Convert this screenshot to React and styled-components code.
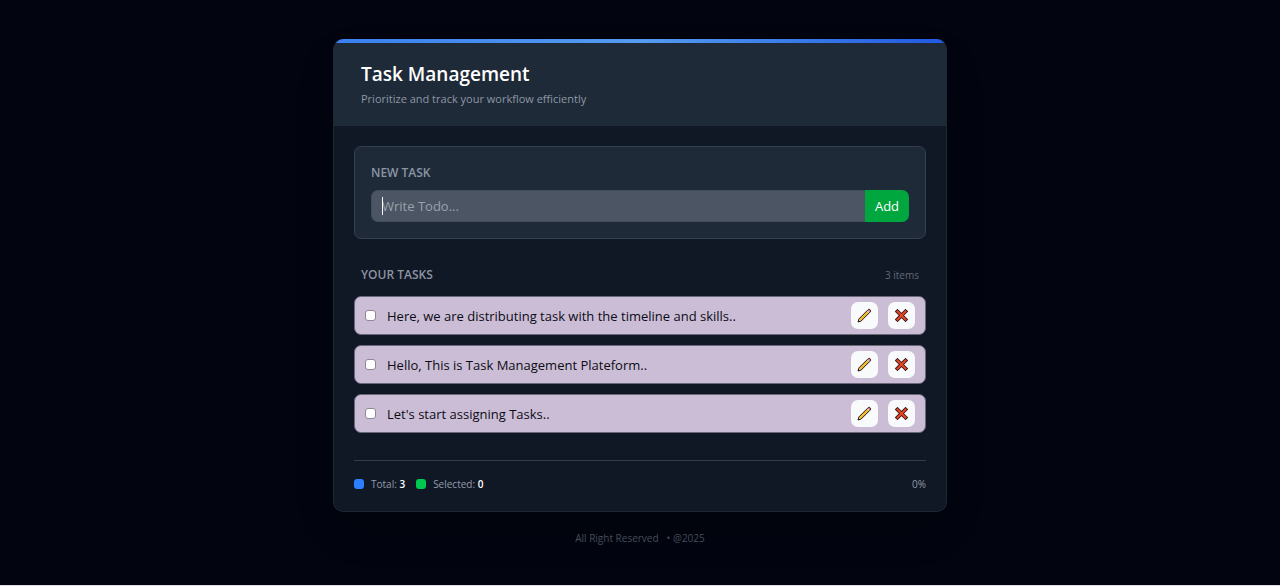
import React, { useState } from "react";
import styled, { createGlobalStyle } from "styled-components";

const GlobalStyle = createGlobalStyle`
  *, *::before, *::after { box-sizing: border-box; }
  body {
    margin: 0;
    background: #02050f;
    font-family: "Open Sans", "Noto Sans", sans-serif;
    color: #fff;
  }
  h1, h2, p, ul { margin: 0; padding: 0; }
`;

const Page = styled.main`
  min-height: 100vh;
  padding: 39px 16px 0;
  display: flex;
  flex-direction: column;
  align-items: center;
  border-bottom: 1px solid #e4dbe8;
`;

const Card = styled.section`
  width: 100%;
  max-width: 614px;
  background: #101725;
  border: 1px solid #1c2635;
  border-top: 0;
  border-radius: 10px;
  overflow: hidden;
  box-shadow: 0 20px 40px -10px rgba(0, 0, 0, 0.25);
`;

const Accent = styled.div`
  height: 4px;
  background: linear-gradient(to right, #3a7ff0, #549cf0 50%, #2159e2);
`;

const Header = styled.header`
  padding: 19px 27px 18px;
  background: #1f2a38;
`;

const Title = styled.h1`
  font-size: 19px;
  line-height: 24px;
  font-weight: 600;
`;

const Subtitle = styled.p`
  margin-top: 4px;
  font-size: 11px;
  line-height: 18px;
  color: #8d97a5;
`;

const Body = styled.div`
  padding: 20px 20px 19px;
`;

const Panel = styled.form`
  padding: 16px;
  background: #1f2a38;
  border: 1px solid #334050;
  border-radius: 7px;
`;

const Label = styled.label`
  display: block;
  padding-top: 1px;
  margin-bottom: 8px;
  font-size: 12px;
  line-height: 18px;
  font-weight: 600;
  color: #8b95a5;
`;

const InputGroup = styled.div`
  display: flex;
  height: 32px;
`;

const Field = styled.div`
  position: relative;
  flex: 1;
  display: flex;

  &:has(input:placeholder-shown)::before {
    content: "";
    position: absolute;
    left: 11px;
    top: 7px;
    width: 1px;
    height: 18px;
    background: #fff;
  }
`;

const Input = styled.input`
  flex: 1;
  min-width: 0;
  padding: 0 10px;
  background: #4b5563;
  border: 1px solid #434e5c;
  border-right: 0;
  border-radius: 7px 0 0 7px;
  outline: 0;
  font: 13px "Open Sans", "Noto Sans", sans-serif;
  color: #fff;
  &::placeholder { color: #99a1ad; opacity: 1; }
`;

const AddButton = styled.button`
  width: 44px;
  padding: 0;
  border: 0;
  border-radius: 0 7px 7px 0;
  background: #00a63e;
  color: #fff;
  font: 500 13px "Open Sans", "Noto Sans", sans-serif;
`;

const ListHead = styled.div`
  display: flex;
  justify-content: space-between;
  align-items: center;
  margin: 27px 7px 12px;
`;

const ListTitle = styled.h2`
  font-size: 12px;
  line-height: 18px;
  font-weight: 600;
  color: #8d94a1;
`;

const Count = styled.span`
  font-size: 10px;
  line-height: 18px;
  color: #616a79;
`;

const List = styled.ul`
  display: flex;
  flex-direction: column;
  gap: 10px;
  list-style: none;
`;

const Row = styled.li`
  display: flex;
  align-items: center;
  gap: 10px;
  min-height: 39px;
  padding: 0 10px;
  background: #cbbdd6;
  border: 1px solid #6c687c;
  border-radius: 7px;
  color: #0c0c14;
`;

const Check = styled.input`
  appearance: none;
  flex: none;
  width: 11px;
  height: 11px;
  margin: 0;
  border: 1px solid #8d8894;
  border-radius: 3px;
  background: #fff;
  &:checked { background: #2b7fff; }
`;

const TaskLabel = styled.label`
  flex: 1;
  display: flex;
  align-items: center;
  gap: 11px;
  font-size: 13px;
  line-height: 20px;
`;

const IconButton = styled.button`
  width: 27px;
  height: 27px;
  padding: 0;
  display: grid;
  place-items: center;
  border: 0;
  border-radius: 7px;
  background: #f9fafb;
`;

const Footer = styled.footer`
  display: flex;
  align-items: center;
  margin-top: 27px;
  padding: 15px 0 0;
  border-top: 1px solid #343c4a;
  font-size: 10px;
  line-height: 16px;
  color: #949ca9;
`;

const Stat = styled.span`
  display: flex;
  align-items: center;
  gap: 7px;
  margin-right: 11px;
  b { font-weight: 600; color: #fff; }
`;

const Dot = styled.i`
  width: 10px;
  height: 10px;
  border-radius: 3px;
  background: ${(p) => p.$color};
`;

const Percent = styled.span`
  margin-left: auto;
`;

const Copyright = styled.p`
  display: flex;
  gap: 8px;
  margin: 18px 0;
  font-size: 10px;
  line-height: 16px;
  color: #454c59;
`;

const Pencil = () => (
  <svg width="15" height="15" viewBox="0 0 15 15" aria-hidden="true">
    <path d="M1 14 L2 10.8 L10.9 1.9 Q11.8 1 12.8 1.5 L13.5 2.2 Q14 3.2 13.1 4.1 L4.2 13 Z" fill="#f5b92e" stroke="#20181c" strokeLinejoin="round" />
    <path d="M10.9 2.6 L11.5 2 Q12.1 1.6 12.6 2 L13 2.4 Q13.4 3 13 3.5 L12.4 4.1 Z" fill="#e8688c" />
    <path d="M10.1 3.4 L10.9 2.6 L12.4 4.1 L11.6 4.9 Z" fill="#c9cbd0" />
    <path d="M1.7 13.3 L2.4 11.2 L3.8 12.6 Z" fill="#f3d0ae" />
    <path d="M1 14 L1.6 12.2 L2.8 13.4 Z" fill="#20181c" />
  </svg>
);

const Cross = () => (
  <svg width="13" height="13" viewBox="0 0 13 13" aria-hidden="true">
    <path d="M2.5 2.5 L10.5 10.5 M10.5 2.5 L2.5 10.5" stroke="#30171a" strokeWidth="3.8" strokeLinecap="square" strokeLinejoin="round" />
    <path d="M2.5 2.5 L10.5 10.5 M10.5 2.5 L2.5 10.5" stroke="#eb4420" strokeWidth="2" strokeLinecap="square" />
  </svg>
);

const initialTasks = [
  "Here, we are distributing task with the timeline and skills..",
  "Hello, This is Task Management Plateform..",
  "Let's start assigning Tasks..",
].map((text, id) => ({ id, text, done: false }));

export default function App() {
  const [tasks, setTasks] = useState(initialTasks);
  const [draft, setDraft] = useState("");
  const selected = tasks.filter((t) => t.done).length;
  const percent = tasks.length ? Math.round((selected / tasks.length) * 100) : 0;

  const add = (e) => {
    e.preventDefault();
    if (!draft.trim()) return;
    setTasks([...tasks, { id: Date.now(), text: draft, done: false }]);
    setDraft("");
  };
  const toggle = (id) => setTasks(tasks.map((t) => (t.id === id ? { ...t, done: !t.done } : t)));
  const edit = (task) => {
    setDraft(task.text);
    setTasks(tasks.filter((t) => t.id !== task.id));
  };

  return (
    <>
      <GlobalStyle />
      <Page>
        <Card>
          <Accent />
          <Header>
            <Title>Task Management</Title>
            <Subtitle>Prioritize and track your workflow efficiently</Subtitle>
          </Header>
          <Body>
            <Panel onSubmit={add}>
              <Label htmlFor="new-task">NEW TASK</Label>
              <InputGroup>
                <Field>
                  <Input id="new-task" placeholder="Write Todo..." value={draft} onChange={(e) => setDraft(e.target.value)} />
                </Field>
                <AddButton type="submit">Add</AddButton>
              </InputGroup>
            </Panel>
            <ListHead>
              <ListTitle>YOUR TASKS</ListTitle>
              <Count>{tasks.length} items</Count>
            </ListHead>
            <List>
              {tasks.map((task) => (
                <Row key={task.id}>
                  <TaskLabel>
                    <Check type="checkbox" checked={task.done} onChange={() => toggle(task.id)} />
                    {task.text}
                  </TaskLabel>
                  <IconButton type="button" aria-label="Edit task" onClick={() => edit(task)}>
                    <Pencil />
                  </IconButton>
                  <IconButton type="button" aria-label="Delete task" onClick={() => setTasks(tasks.filter((t) => t.id !== task.id))}>
                    <Cross />
                  </IconButton>
                </Row>
              ))}
            </List>
            <Footer>
              <Stat><Dot $color="#2b7fff" /><span>Total: <b>{tasks.length}</b></span></Stat>
              <Stat><Dot $color="#00c950" /><span>Selected: <b>{selected}</b></span></Stat>
              <Percent>{percent}%</Percent>
            </Footer>
          </Body>
        </Card>
        <Copyright><span>All Right Reserved</span><span>• @2025</span></Copyright>
      </Page>
    </>
  );
}
